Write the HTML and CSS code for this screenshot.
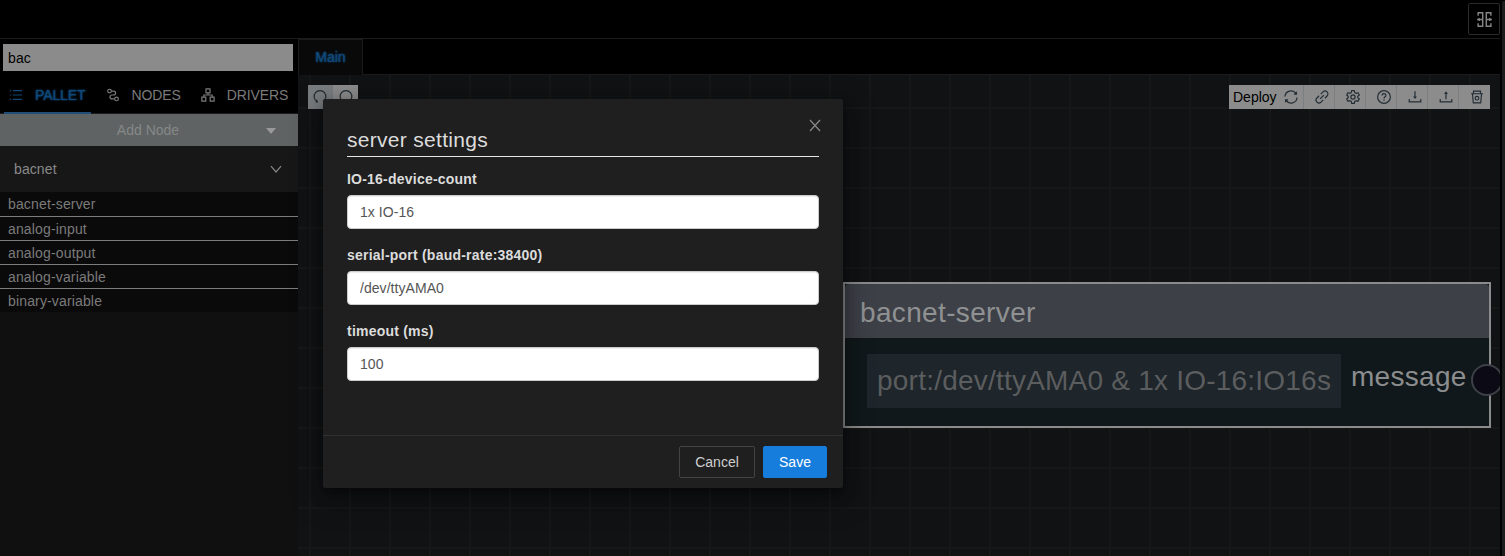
FILE: index.html
```html
<!DOCTYPE html>
<html lang="en">
<head>
<meta charset="utf-8">
<title>Flow editor</title>
<link rel="stylesheet" href="styles.css">
</head>
<body>
<div class="app">
  <header class="topbar">
    <button class="split-btn" aria-label="Toggle panels">
      <svg class="icon" viewBox="0 0 16 16"><path d="M2 4.500V1.700H6.300V14.300H2V11.500M14 4.500V1.700H9.700V14.300H14V11.500M1 8H6M10 8H15M3 6.500V9.500M13 6.500V9.500"/></svg>
    </button>
  </header>
  <div class="workspace">
    <aside class="sidebar">
      <div class="search"><input class="search-input" value="bac" aria-label="Search"></div>
      <nav class="tabs">
        <a class="tab tab-active"><svg class="icon" viewBox="0 0 16 16"><path d="M4.500 3H15M4.500 8H15M4.500 13H15M1 3H2.500M1 8H2.500M1 13H2.500"/></svg><span>PALLET</span></a>
        <a class="tab"><svg class="icon" viewBox="0 0 16 16"><circle cx="4" cy="3.500" r="2.100"/><circle cx="12" cy="12.500" r="2.100"/><path d="M6.200 3.500H8.500Q11 3.500 11 5.700T8.500 8H7Q4.500 8 4.500 10.200T7 12.500H9.800"/></svg><span>NODES</span></a>
        <a class="tab"><svg class="icon" viewBox="0 0 16 16"><path d="M5.700 1H10.300V5.500H5.700ZM1 10.500H5.500V15H1ZM10.500 10.500H15V15H10.500ZM8 5.500V8M3.200 10.500V8H12.800V10.500"/></svg><span>DRIVERS</span></a>
      </nav>
      <div class="add-node"><span>Add Node</span><i class="caret"></i></div>
      <div class="group"><span>bacnet</span><svg class="chevron" viewBox="0 0 12 12"><path d="M1 3.200L6 9L11 3.200"/></svg></div>
      <ul class="node-list">
        <li>bacnet-server</li>
        <li>analog-input</li>
        <li>analog-output</li>
        <li>analog-variable</li>
        <li>binary-variable</li>
      </ul>
    </aside>
    <main class="editor">
      <div class="editor-tabs"><span class="editor-tab">Main</span></div>
      <div class="canvas">
        <div class="history">
          <span class="history-btn undo"><svg class="icon" viewBox="0 0 16 16"><path d="M4.600 13.200A6.700 6.700 0 1 1 11.400 13.200M4 11.200L5 13.500L3 14"/></svg></span>
          <span class="history-btn"><svg class="icon" viewBox="0 0 16 16"><path d="M11.400 13.200A6.700 6.700 0 1 0 4.600 13.200"/></svg></span>
        </div>
        <div class="toolbar">
          <span class="tool deploy"><span>Deploy</span><svg class="icon" viewBox="0 0 16 16"><path d="M1.100 7.500A6.900 6.900 0 0 1 13.700 4.100M14.900 8.500A6.900 6.900 0 0 1 2.300 11.900M14.200 1.900V4.800H11.400M1.800 14.100V11.200H4.600"/></svg></span>
          <span class="tool"><svg class="icon" viewBox="0 0 16 16"><path d="M6.600 4.700L9.100 2.200A3.300 3.300 0 0 1 13.800 6.900L11.300 9.400M9.400 11.300L6.900 13.800A3.300 3.300 0 0 1 2.200 9.100L4.700 6.600M5.800 10.200L10.200 5.800"/></svg></span>
          <span class="tool"><svg class="icon" viewBox="0 0 16 16"><path d="M6.500 .8H9.500L10 3L11.600 3.900L13.700 3.200L15.200 5.800L13.500 7.200V8.800L15.200 10.200L13.700 12.800L11.600 12.100L10 13L9.500 15.200H6.500L6 13L4.400 12.100L2.300 12.800L.8 10.200L2.500 8.800V7.200L.8 5.800L2.300 3.200L4.400 3.900L6 3Z"/><circle cx="8" cy="8" r="2.400"/></svg></span>
          <span class="tool"><svg class="icon" viewBox="0 0 16 16"><circle cx="8" cy="8" r="7.300"/><path d="M5.800 6.300C5.800 3.400 10.200 3.500 10.200 6.200C10.200 7.800 8 7.700 8 9.800M8 10.900V12.200"/></svg></span>
          <span class="tool"><svg class="icon" viewBox="0 0 16 16"><path d="M1.400 10.200V13.600H14.600V10.200M8 1.500V9"/><path class="solid" d="M5.800 7.400H10.200L8 10.400Z"/></svg></span>
          <span class="tool"><svg class="icon" viewBox="0 0 16 16"><path d="M1.400 10.200V13.600H14.600V10.200M8 10.500V3"/><path class="solid" d="M5.800 4.500H10.200L8 1.500Z"/></svg></span>
          <span class="tool"><svg class="icon" viewBox="0 0 16 16"><path d="M1.200 4.300H14.800M4 4V1.300H12V4M2.800 4.500L3.800 14.800H12.200L13.200 4.500"/><circle cx="8" cy="9.300" r="2.100"/></svg></span>
        </div>
        <section class="node">
          <h2 class="node-title">bacnet-server</h2>
          <div class="node-body">
            <div class="node-info">port:/dev/ttyAMA0 &amp; 1x IO-16:IO16s</div>
            <span class="node-output">message</span>
          </div>
          <i class="socket"></i>
        </section>
      </div>
    </main>
  </div>
  <div class="scrollbar"></div>
</div>
<div class="modal" role="dialog">
  <svg class="close" viewBox="0 0 12 12"><path d="M1 .5L11 11.500M11 .5L1 11.500"/></svg>
  <div class="modal-body">
    <h1 class="modal-title">server settings</h1>
    <label class="field"><span>IO-16-device-count</span><input value="1x IO-16"></label>
    <label class="field"><span>serial-port (baud-rate:38400)</span><input value="/dev/ttyAMA0"></label>
    <label class="field"><span>timeout (ms)</span><input value="100"></label>
  </div>
  <footer class="modal-footer">
    <button class="btn">Cancel</button>
    <button class="btn btn-primary">Save</button>
  </footer>
</div>
</body>
</html>
```
FILE: styles.css
```css
* { box-sizing: border-box; }
body {
  margin: 0;
  background: #000;
  color: #7b7b7b;
  font: 14px/22px "Liberation Sans", Arial, sans-serif;
  overflow: hidden;
}
input, button { font: inherit; letter-spacing: inherit; }
.icon { width: 14px; height: 14px; flex: none; fill: none; stroke: currentColor; stroke-width: 1.350; }
.solid { fill: currentColor; stroke: none; }

.app { position: relative; height: 556px; display: flex; flex-direction: column; }
.topbar {
  height: 39px;
  width: 1500px;
  border-bottom: 1px solid #1c1c1c;
  display: flex;
  justify-content: flex-end;
  padding-top: 3px;
}
.split-btn {
  width: 32px;
  height: 32px;
  padding: 0;
  border: 1px solid #2a2a2a;
  border-radius: 2px;
  background: #000;
  color: #858585;
  display: grid;
  place-items: center;
}
.split-btn .icon { width: 17px; height: 17px; }
.workspace { flex: 1; display: flex; min-height: 0; }
.scrollbar { position: absolute; right: 0; top: 1px; width: 3px; height: 555px; background: #1c1c1e; border-radius: 2px 0 0; }

.sidebar { width: 298px; background: #101010; display: flex; flex-direction: column; }
.search { background: #000; padding: 5px 5px 6px 3px; display: flex; }
.search-input { width: 290px; height: 27px; border: 0; border-radius: 0; padding: 0 5px; background: #8b8b8b; color: #000; outline: 0; letter-spacing: .1px; }
.tabs { height: 37px; background: #000; border-bottom: 1px solid #1b1b1b; display: flex; gap: 10px; padding-left: 4px; letter-spacing: -.1px; }
.tab { height: 37px; display: flex; align-items: center; gap: 12px; padding: 0 5px 2px; white-space: nowrap; }
.tab-active { color: #114877; border-bottom: 2px solid #214e76; padding-bottom: 0; }
.tab-active span { text-shadow: 0 0 2px #1268b0; }
.add-node {
  height: 32px;
  background: #5f6363;
  color: #858888;
  display: flex;
  align-items: center;
  justify-content: center;
  position: relative;
  padding-right: 2px;
}
.caret { position: absolute; right: 22px; top: 14px; border: 5px solid transparent; border-top: 6px solid #999; border-bottom: 0; }
.group { height: 46px; background: #171717; color: #898989; display: flex; align-items: center; justify-content: space-between; padding: 0 16px 0 14px; letter-spacing: .1px; }
.chevron { width: 12px; height: 12px; fill: none; stroke: #858585; stroke-width: 1.200; }
.node-list { margin: 0; padding: 0; list-style: none; background: #0a0a0a; letter-spacing: .15px; }
.node-list li { height: 24px; padding-left: 8px; line-height: 24px; border-bottom: 1px solid #7c7c7c; }
.node-list li:first-child { height: 25px; }
.node-list li:last-child { height: 23px; border: 0; }

.editor { width: 1202px; display: flex; flex-direction: column; }
.editor-tabs { height: 36px; border-bottom: 1px solid #1b1b1b; display: flex; }
.editor-tab {
  width: 65px;
  height: 36px;
  line-height: 35px;
  text-align: center;
  background: #090909;
  border: 1px solid #1b1b1b;
  border-bottom: 0;
  color: #114877;
  text-shadow: 0 0 2px #1268b0;
}
.canvas {
  flex: 1;
  position: relative;
  overflow: hidden;
  background:
    linear-gradient(90deg, #161817 2px, transparent 2px) 11px 0 / 40px 40px,
    linear-gradient(#161817 2px, transparent 2px) 0 32px / 40px 40px,
    #111214;
}
.history { position: absolute; left: 10px; top: 10px; display: flex; color: #202b33; }
.history-btn { width: 25px; height: 24px; background: #8c8c8c; display: grid; place-items: center; }
.undo { background: #7a7d7f; padding-right: 1px; }
.toolbar { position: absolute; left: 931px; top: 10px; height: 24px; display: flex; background: #8c8c8c; color: #232e36; }
.tool { width: 31px; display: flex; align-items: center; padding-left: 11px; border-right: 1px solid #7b7f80; }
.tool:last-child { border: 0; }
.deploy { width: 75px; padding-left: 4px; gap: 7px; }
.deploy span { color: #000; }

.node { position: absolute; left: 545px; top: 207px; width: 648px; height: 146px; border: 2px solid #8a8c8b; background: #11181b; font-size: 28px; letter-spacing: .3px; }
.node-title { margin: 0; height: 54px; padding-left: 15px; line-height: 57px; font-size: 28px; font-weight: 400; letter-spacing: .35px; background: #3d4047; color: #8f9192; border-radius: 4px 4px 0 0; }
.node-body { padding: 16px 0 0 22px; display: flex; gap: 10px; }
.node-info { width: 474px; height: 54px; padding-left: 10px; line-height: 54px; letter-spacing: .22px; background: #1e252b; color: #5b5d5e; white-space: nowrap; }
.node-output { line-height: 46px; color: #8b8d8e; }
.socket { position: absolute; left: 626px; top: 80px; width: 32px; height: 32px; border: 2px solid #3d4047; border-radius: 50%; background: #0c0b15; }

.modal {
  position: absolute;
  left: 323px;
  top: 99px;
  width: 520px;
  height: 389px;
  display: flex;
  flex-direction: column;
  background: #1f1f1f;
  color: #dcdcdc;
  border-radius: 2px;
  box-shadow: 0 3px 6px -4px rgba(0,0,0,.48), 0 6px 16px rgba(0,0,0,.32), 0 9px 28px 8px rgba(0,0,0,.2);
}
.close { position: absolute; right: 22px; top: 20px; width: 12px; height: 13px; fill: none; stroke: #858585; stroke-width: 1.300; }
.modal-body { flex: 1; padding: 24px; }
.modal-title { margin: 0 0 11px; height: 34px; line-height: 34px; font-size: 21px; font-weight: 400; letter-spacing: .3px; border-bottom: 1px solid #e5e5e5; }
.field { display: flex; flex-direction: column; gap: 5px; margin-bottom: 15px; font-weight: 700; letter-spacing: .22px; }
.field input {
  height: 34px;
  padding: 0 12px;
  border: 1px solid #ccc;
  border-radius: 4px;
  background: #fff;
  color: #555;
  font-weight: 400;
  letter-spacing: .05px;
  box-shadow: inset 0 1px 1px rgba(0,0,0,.075);
}
.modal-footer { height: 53px; border-top: 1px solid #303030; padding: 10px 16px; display: flex; justify-content: flex-end; gap: 8px; }
.btn { width: 76px; height: 32px; padding: 0; border: 1px solid #434343; border-radius: 2px; background: transparent; color: #d0d0d0; }
.btn-primary { width: 64px; background: #177ddc; border-color: #177ddc; color: #fff; }
```
